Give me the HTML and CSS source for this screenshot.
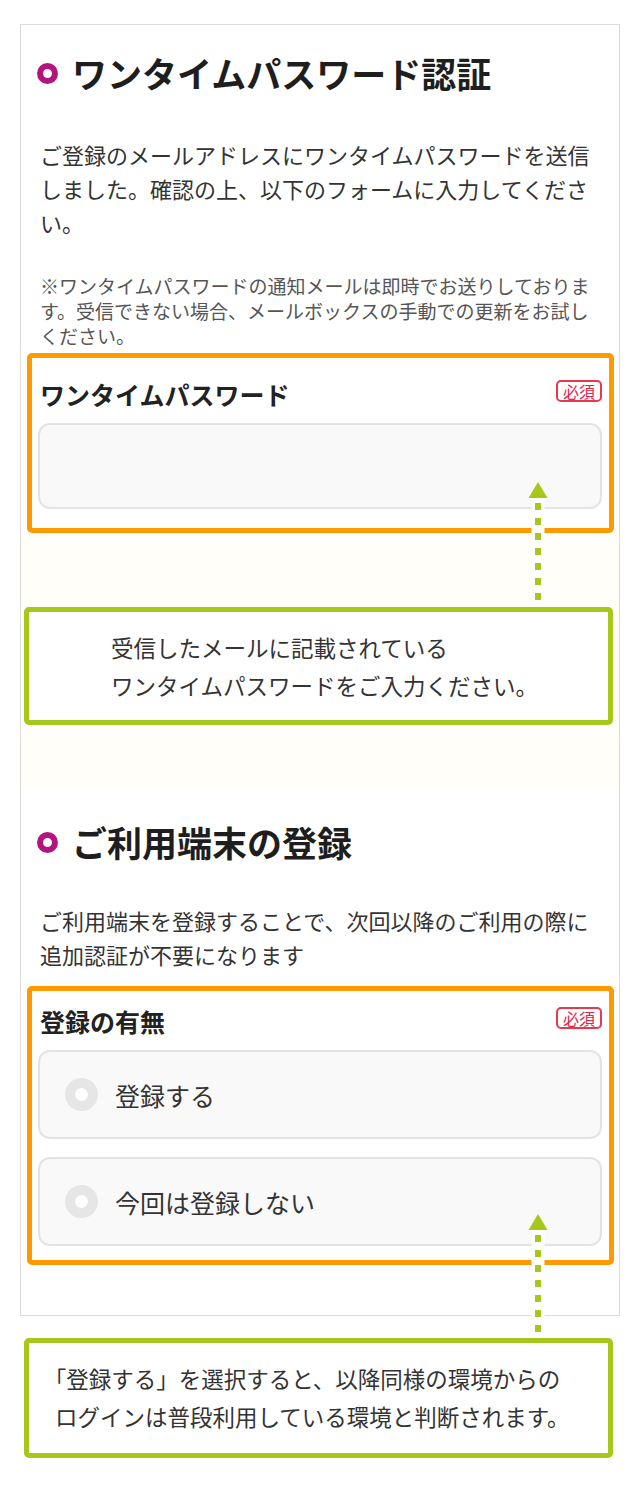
FILE: index.html
```html
<!DOCTYPE html>
<html lang="ja">
<head>
    <meta charset="UTF-8">
    <meta name="viewport" content="width=device-width, initial-scale=1.0">
    <title>ワンタイムパスワード認証</title>
    <link rel="stylesheet" href="styles.css">
</head>
<body>
    <div class="page">
        <div class="card">
            <h2 class="section-title"><span class="ring"></span>ワンタイムパスワード認証</h2>
            <p class="lead">ご登録のメールアドレスにワンタイムパスワードを送信しました。確認の上、以下のフォームに入力してください。</p>
            <p class="note">※ワンタイムパスワードの通知メールは即時でお送りしております。受信できない場合、メールボックスの手動での更新をお試しください。</p>

            <div class="field field-otp">
                <div class="field-head">
                    <span class="field-label">ワンタイムパスワード</span>
                    <span class="badge">必須</span>
                </div>
                <input class="text-input" type="text" autocomplete="one-time-code">
            </div>

            <div class="hint-area">
                <div class="hint hint-center">
                    受信したメールに記載されている<br>ワンタイムパスワードをご入力ください。
                </div>
            </div>

            <h2 class="section-title section-title-second"><span class="ring"></span>ご利用端末の登録</h2>
            <p class="lead lead-second">ご利用端末を登録することで、次回以降のご利用の際に追加認証が不要になります</p>

            <div class="field field-device">
                <div class="field-head">
                    <span class="field-label">登録の有無</span>
                    <span class="badge">必須</span>
                </div>
                <div class="options">
                    <label class="option"><span class="radio"></span>登録する</label>
                    <label class="option"><span class="radio"></span>今回は登録しない</label>
                </div>
            </div>
        </div>

        <div class="hint hint-bottom">
            <span class="bracket">「</span>登録する」を選択すると、以降同様の環境からの<br>ログインは普段利用している環境と判断されます。
        </div>

        <!-- dashed pointers from the notes up to the fields -->
        <svg class="arrow arrow-otp" width="20" height="126" viewBox="0 0 20 126">
            <rect x="3.5" y="16" width="13" height="106" fill="#fff"/>
            <polygon points="10,0 0.5,16 19.5,16" fill="#a6c71b"/>
            <line x1="10" y1="21" x2="10" y2="126" stroke="#a6c71b" stroke-width="6" stroke-dasharray="7 8"/>
        </svg>
        <svg class="arrow arrow-device" width="20" height="126" viewBox="0 0 20 126">
            <rect x="3.5" y="16" width="13" height="106" fill="#fff"/>
            <polygon points="10,0 0.5,16 19.5,16" fill="#a6c71b"/>
            <line x1="10" y1="21" x2="10" y2="126" stroke="#a6c71b" stroke-width="6" stroke-dasharray="7 8"/>
        </svg>
    </div>
</body>
</html>
```

FILE: styles.css
```css
body {
    margin: 0;
    background-color: #fff;
    color: #333;
    font-family: "Noto Sans CJK JP", "Noto Sans", sans-serif;
}

.page {
    position: relative;
    width: 640px;
    padding: 24px 20px 47px;
    box-sizing: border-box;
}

.card {
    border: 1px solid #ddd;
    padding: 24px 19px 50px;
}

.section-title {
    display: flex;
    align-items: center;
    gap: 14px;
    margin: 0;
    font-size: 35px;
    line-height: 48px;
    font-weight: 700;
    color: #1e1e1e;
}

.section-title-second {
    margin-top: 31px;
}

.ring {
    width: 21px;
    height: 21px;
    box-sizing: border-box;
    border: 6px solid #b3157f;
    border-radius: 50%;
    margin-left: -3px;
    flex-shrink: 0;
}

.lead {
    margin: 40px 0 0;
    font-size: 22px;
    line-height: 34px;
    color: #333;
}

.lead-second {
    margin-top: 37px;
}

.note {
    margin: 34px 0 0;
    font-size: 19px;
    line-height: 25px;
    color: #555;
}

.field {
    border: 5px solid #ff9900;
    border-radius: 5px;
    padding: 21px 7px 19px 6px;
    margin: 5px -14px 0 -13px;
    background-color: #fff;
}

.field-device {
    margin-top: 15px;
    padding-top: 15px;
    padding-bottom: 14px;
}

.field-head {
    display: flex;
    justify-content: space-between;
    align-items: center;
    padding-left: 2px;
    height: 30px;
}

.field-label {
    font-size: 25px;
    line-height: 30px;
    font-weight: 700;
    color: #222;
}

.badge {
    font-size: 16px;
    line-height: 18px;
    color: #e2264d;
    border: 2px solid #e8384f;
    border-radius: 5px;
    padding: 0 5px;
    margin-bottom: 6px;
}

.text-input {
    display: block;
    width: 100%;
    height: 86px;
    box-sizing: border-box;
    margin-top: 14px;
    border: 2px solid #e3e3e3;
    border-radius: 12px;
    background-color: #f9f9f9;
    font: inherit;
}

.options {
    display: grid;
    gap: 18px;
    margin-top: 14px;
}

.option {
    display: flex;
    align-items: center;
    height: 89px;
    box-sizing: border-box;
    padding-left: 25px;
    border: 2px solid #e3e3e3;
    border-radius: 12px;
    background-color: #f9f9f9;
    font-size: 25px;
    color: #333;
}

.radio {
    width: 33px;
    height: 33px;
    box-sizing: border-box;
    border: 10px solid #e6e6e6;
    border-radius: 50%;
    background-color: #fff;
    margin-right: 17px;
}

.hint-area {
    margin: 0 -19px;
    padding: 74px 6px 62px 3px;
    background-color: #fffef8;
}

.hint {
    border: 5px solid #a6c71b;
    border-radius: 5px;
    background-color: #fff;
    font-size: 22.5px;
    line-height: 38px;
    color: #333;
}

.hint-center {
    padding: 16px 0 16px 82px;
}

.hint-bottom {
    margin: 22px 7px 0 4px;
    padding: 16px 0 18px 26px;
}

.bracket {
    font-feature-settings: "halt";
}

.arrow {
    position: absolute;
    left: 528px;
}

.arrow-otp {
    top: 482px;
}

.arrow-device {
    top: 1214px;
}
```
